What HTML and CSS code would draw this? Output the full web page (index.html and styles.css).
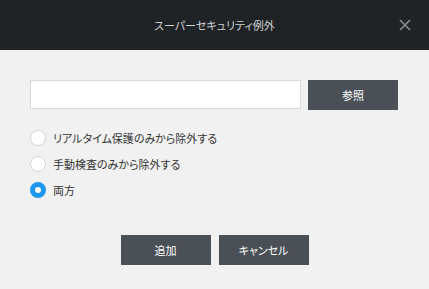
FILE: index.html
```html
<!DOCTYPE html>
<html lang="ja">
<head>
    <meta charset="utf-8">
    <title>スーパーセキュリティ例外</title>
    <link rel="stylesheet" href="styles.css">
</head>
<body>
    <div class="dialog">
        <div class="titlebar">
            <span class="title">スーパーセキュリティ例外</span>
            <button class="close" aria-label="閉じる">
                <svg width="12" height="12" viewBox="0 0 12 12">
                    <path d="M1 1L11 11M11 1L1 11" stroke="#8a8d90" stroke-width="1.6"/>
                </svg>
            </button>
        </div>

        <div class="body">
            <div class="pathrow">
                <input class="pathinput" type="text">
                <button class="btn">参照</button>
            </div>

            <div class="options">
                <label class="option"><span class="radio"></span>リアルタイム保護のみから除外する</label>
                <label class="option"><span class="radio"></span>手動検査のみから除外する</label>
                <label class="option"><span class="radio checked"></span>両方</label>
            </div>

            <div class="actions">
                <button class="btn">追加</button>
                <button class="btn">キャンセル</button>
            </div>
        </div>
    </div>
</body>
</html>
```

FILE: styles.css
```css
body {
    margin: 0;
    background: #f1f1f1;
    font-family: "Noto Sans CJK JP", "Liberation Sans", sans-serif;
    font-size: 11px;
    font-feature-settings: "palt";
    color: #333;
}

.dialog {
    width: 429px;
    height: 289px;
    display: flex;
    flex-direction: column;
}

.titlebar {
    height: 50px;
    background: #202326;
    display: flex;
    align-items: center;
    justify-content: center;
    position: relative;
}

.title {
    color: #cfd1d3;
    font-size: 11px;
}

.close {
    position: absolute;
    right: 18px;
    top: 19px;
    width: 12px;
    height: 12px;
    padding: 0;
    border: none;
    background: none;
    display: flex;
}

.body {
    padding: 30px 30px 0 30px;
}

.pathrow {
    display: flex;
    gap: 7px;
}

.pathinput {
    width: 271px;
    height: 29px;
    box-sizing: border-box;
    border: 1px solid #d9d9d9;
    background: #fff;
    margin: 0;
}

.btn {
    width: 90px;
    height: 30px;
    border: none;
    background: #4a5055;
    color: #fff;
    font-family: inherit;
    font-feature-settings: inherit;
    font-size: 11px;
    padding: 0;
}

.options {
    margin-top: 20px;
    display: flex;
    flex-direction: column;
    gap: 10px;
}

.option {
    display: flex;
    align-items: center;
    gap: 7px;
    height: 16px;
}

.radio {
    width: 16px;
    height: 16px;
    box-sizing: border-box;
    border: 1px solid #d6d6d6;
    border-radius: 50%;
    background: #fff;
}

.radio.checked {
    border: 5px solid #1e96f0;
}

.actions {
    margin-top: 37px;
    display: flex;
    justify-content: center;
    gap: 8px;
}
```
